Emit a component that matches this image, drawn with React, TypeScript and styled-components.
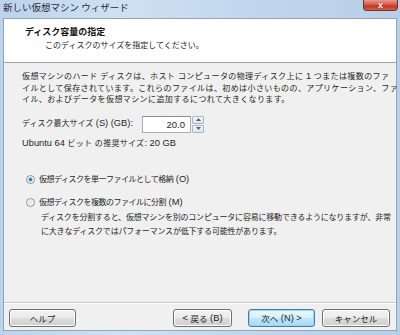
import styled, { createGlobalStyle } from "styled-components";

const GlobalStyle = createGlobalStyle`
  html, body {
    margin: 0;
    padding: 0;
    background: #ffffff;
  }
  * {
    box-sizing: border-box;
  }
`;

const FONT = `"Liberation Sans", "Noto Sans CJK JP", "Noto Sans", sans-serif`;
const CJK = `"Noto Sans CJK JP", "Noto Sans", "Liberation Sans", sans-serif`;

const Window = styled.div`
  width: 400px;
  height: 335px;
  display: flex;
  flex-direction: column;
  padding: 0 3px 4px 3px;
  background: linear-gradient(90deg, #bcd3ec 0%, #cfe0f2 30%, #c2d7ee 60%, #b8cfe9 100%);
  font-family: ${FONT};
  color: #1e1e1e;
`;

const TitleBar = styled.div`
  height: 18px;
  display: flex;
  justify-content: space-between;
  align-items: flex-start;
  flex-shrink: 0;
`;

const TitleText = styled.span`
  font-family: ${CJK};
  font-size: 9.5px;
  line-height: 13px;
  padding-top: 1px;
  color: #1f2a36;
`;

const CloseButton = styled.div`
  width: 35px;
  height: 11px;
  margin-right: -1px;
  border: 1px solid #7a2f27;
  border-top: none;
  border-radius: 0 0 4px 4px;
  background: linear-gradient(180deg, #e99a8e 0%, #d65a48 45%, #c2381f 60%, #d7604c 100%);
  display: flex;
  align-items: center;
  justify-content: center;
  color: #ffffff;
  font-family: "Liberation Sans", sans-serif;
  font-weight: bold;
  font-size: 9px;
  line-height: 9px;
  text-shadow: 0 0 1px #5a1a12;
`;

const Client = styled.div`
  flex: 1;
  display: flex;
  flex-direction: column;
  border: 1px solid #8fa6bd;
  background: #f0f0f0;
`;

const Header = styled.div`
  height: 44px;
  flex-shrink: 0;
  background: #ffffff;
  border-bottom: 1px solid #a0a0a0;
  padding: 7px 0 0 21px;
  font-family: ${CJK};
`;

const HeaderTitle = styled.div`
  font-size: 9px;
  font-weight: bold;
  line-height: 12px;
  color: #111111;
`;

const HeaderSub = styled.div`
  font-size: 8px;
  line-height: 12px;
  padding-left: 20px;
  margin-top: 1px;
`;

const Body = styled.div`
  flex: 1;
  padding: 8px 0 0 18px;
  font-size: 8px;
  line-height: 11.6px;
`;

const Latin = styled.span`
  font-size: 9.3px;
  letter-spacing: 0;
  white-space: pre;
`;

const Paragraph = styled.p`
  margin: 0;
  white-space: nowrap;
  letter-spacing: 0.4px;
`;

const SizeRow = styled.div`
  display: flex;
  align-items: center;
  margin-top: 10px;
  height: 17px;
`;

const SizeLabel = styled.span`
  width: 120px;
`;

const NumberBox = styled.div`
  width: 49px;
  height: 17px;
  background: #ffffff;
  border: 1px solid #abadb3;
  border-top-color: #8a8d94;
  font-size: 9.5px;
  line-height: 15px;
  text-align: right;
  padding-right: 5px;
`;

const Spinner = styled.div`
  width: 12px;
  height: 17px;
  margin-left: 1px;
  display: flex;
  flex-direction: column;
  gap: 1px;
`;

const SpinButton = styled.div`
  flex: 1;
  border: 1px solid #a9b5c6;
  border-radius: 1px;
  background: linear-gradient(180deg, #f6f8fb, #dde4ee);
  display: flex;
  align-items: center;
  justify-content: center;
`;

const Recommend = styled.div`
  margin-top: 5px;
  letter-spacing: 0.3px;
`;

const RadioGroup = styled.div`
  margin-top: 24px;
  display: flex;
  flex-direction: column;
`;

const RadioRow = styled.label`
  display: flex;
  align-items: center;
  gap: 4px;
  height: 12px;
  margin-bottom: 11px;
  margin-left: 4px;
  letter-spacing: -0.5px;
`;

const RadioCircle = styled.span<{ $checked?: boolean }>`
  width: 9px;
  height: 9px;
  border-radius: 50%;
  border: 1px solid #8a95a3;
  background: ${(p) =>
    p.$checked
      ? "radial-gradient(circle, #2a77c4 0%, #3d8fd6 35%, #e9eef3 45%, #f4f6f8 100%)"
      : "radial-gradient(circle, #e2e6ea 0%, #f6f7f8 100%)"};
  flex-shrink: 0;
`;

const Description = styled.div`
  margin-top: -8px;
  padding-left: 19px;
  white-space: nowrap;
  line-height: 14px;
  letter-spacing: -0.2px;
`;

const Footer = styled.div`
  height: 28px;
  flex-shrink: 0;
  border-top: 1px solid #c8c8c8;
  box-shadow: inset 0 1px 0 #ffffff;
  display: flex;
  align-items: flex-start;
  padding: 6px 6px 0 5px;
`;

const Button = styled.div<{ $focused?: boolean; $width?: number }>`
  width: ${(p) => p.$width ?? 67}px;
  height: 18px;
  border-radius: 3px;
  border: 1px solid ${(p) => (p.$focused ? "#3c7fb1" : "#707070")};
  background: ${(p) =>
    p.$focused
      ? "linear-gradient(180deg, #eaf6fd 0%, #d9f0fc 50%, #bee6fd 51%, #a7d9f5 100%)"
      : "linear-gradient(180deg, #f2f2f2 0%, #ebebeb 50%, #dddddd 51%, #cfcfcf 100%)"};
  box-shadow: inset 0 0 0 1px ${(p) => (p.$focused ? "#9fd3f2" : "#fcfcfc")};
  display: flex;
  align-items: center;
  justify-content: center;
  font-size: 8.5px;
  color: #222222;
  white-space: pre;
`;

const Spacer = styled.div`
  flex: 1;
`;

const Gap = styled.div<{ $w: number }>`
  width: ${(p) => p.$w}px;
  flex-shrink: 0;
`;

function Arrow({ up }: { up?: boolean }) {
  return (
    <svg width="5" height="3" viewBox="0 0 5 3">
      <path d={up ? "M0 3 L2.5 0 L5 3 Z" : "M0 0 L2.5 3 L5 0 Z"} fill="#4d6185" />
    </svg>
  );
}

export default function App() {
  return (
    <>
      <GlobalStyle />
      <Window>
        <TitleBar>
          <TitleText>新しい仮想マシン ウィザード</TitleText>
          <CloseButton>x</CloseButton>
        </TitleBar>
        <Client>
          <Header>
            <HeaderTitle>ディスク容量の指定</HeaderTitle>
            <HeaderSub>このディスクのサイズを指定してください。</HeaderSub>
          </Header>
          <Body>
            <Paragraph>
              仮想マシンのハード ディスクは、ホスト コンピュータの物理ディスク上に <Latin>1</Latin> つまたは複数のファ
            </Paragraph>
            <Paragraph>
              イルとして保存されています。これらのファイルは、初めは小さいものの、アプリケーション、ファ
            </Paragraph>
            <Paragraph>イル、およびデータを仮想マシンに追加するにつれて大きくなります。</Paragraph>
            <SizeRow>
              <SizeLabel>
                ディスク最大サイズ<Latin> (S) (GB):</Latin>
              </SizeLabel>
              <NumberBox>20.0</NumberBox>
              <Spinner>
                <SpinButton>
                  <Arrow up />
                </SpinButton>
                <SpinButton>
                  <Arrow />
                </SpinButton>
              </Spinner>
            </SizeRow>
            <Recommend>
              <Latin>Ubuntu 64</Latin> ビット の推奨サイズ<Latin>: 20 GB</Latin>
            </Recommend>
            <RadioGroup>
              <RadioRow>
                <RadioCircle $checked />
                <span>
                  仮想ディスクを単一ファイルとして格納<Latin> (O)</Latin>
                </span>
              </RadioRow>
              <RadioRow>
                <RadioCircle />
                <span>
                  仮想ディスクを複数のファイルに分割<Latin> (M)</Latin>
                </span>
              </RadioRow>
              <Description>
                ディスクを分割すると、仮想マシンを別のコンピュータに容易に移動できるようになりますが、非常
                <br />
                に大きなディスクではパフォーマンスが低下する可能性があります。
              </Description>
            </RadioGroup>
          </Body>
          <Footer>
            <Button>ヘルプ</Button>
            <Spacer />
            <Button $width={59}>
              <Latin>&lt; </Latin>戻る<Latin> (B)</Latin>
            </Button>
            <Gap $w={16} />
            <Button $focused>
              次へ<Latin> (N) &gt;</Latin>
            </Button>
            <Gap $w={7} />
            <Button $width={68}>キャンセル</Button>
          </Footer>
        </Client>
      </Window>
    </>
  );
}
